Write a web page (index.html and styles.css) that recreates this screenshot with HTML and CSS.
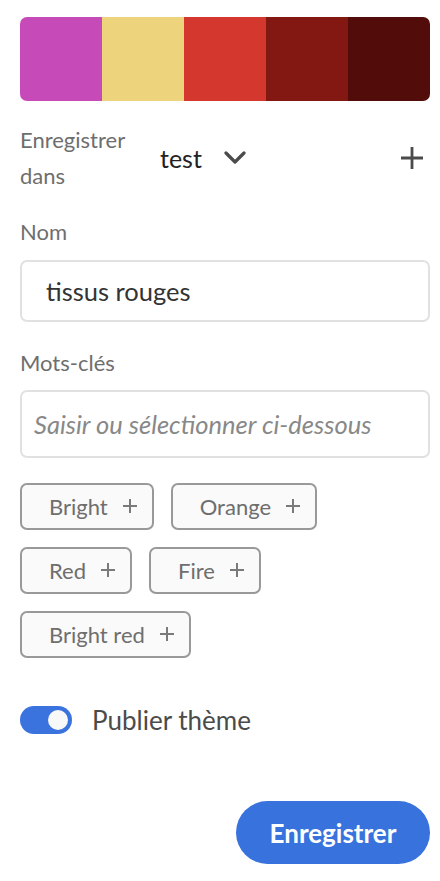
FILE: index.html
```html
<!DOCTYPE html>
<html lang="fr">
<head>
<meta charset="utf-8">
<title>Enregistrer thème</title>
<link rel="stylesheet" href="styles.css">
</head>
<body>
<div class="panel">
  <div class="palette">
    <div class="swatch s1"></div>
    <div class="swatch s2"></div>
    <div class="swatch s3"></div>
    <div class="swatch s4"></div>
    <div class="swatch s5"></div>
  </div>

  <div class="save-row">
    <div class="save-label">Enregistrer<br>dans</div>
    <div class="lib-select">
      <span class="lib-name">test</span>
      <svg class="chevron" width="22" height="14" viewBox="0 0 22 14"><path d="M2 2 L11 11 L20 2" fill="none" stroke="#4b4b4b" stroke-width="3.2" stroke-linecap="round" stroke-linejoin="round"/></svg>
    </div>
    <svg class="add-lib" width="24" height="24" viewBox="0 0 24 24"><path d="M12 1 V23 M1 12 H23" stroke="#4b4b4b" stroke-width="2.8" stroke-linecap="butt"/></svg>
  </div>

  <div class="field-label label-nom">Nom</div>
  <div class="input name-input">tissus rouges</div>

  <div class="field-label label-tags">Mots-clés</div>
  <div class="input tags-input">Saisir ou sélectionner ci-dessous</div>

  <div class="tags">
    <div class="tag-row">
      <span class="tag">Bright<svg class="tag-plus" width="14" height="14" viewBox="0 0 14 14"><path d="M7 0 V14 M0 7 H14" stroke="#7a7a7a" stroke-width="2"/></svg></span>
      <span class="tag">Orange<svg class="tag-plus" width="14" height="14" viewBox="0 0 14 14"><path d="M7 0 V14 M0 7 H14" stroke="#7a7a7a" stroke-width="2"/></svg></span>
    </div>
    <div class="tag-row">
      <span class="tag">Red<svg class="tag-plus" width="14" height="14" viewBox="0 0 14 14"><path d="M7 0 V14 M0 7 H14" stroke="#7a7a7a" stroke-width="2"/></svg></span>
      <span class="tag">Fire<svg class="tag-plus" width="14" height="14" viewBox="0 0 14 14"><path d="M7 0 V14 M0 7 H14" stroke="#7a7a7a" stroke-width="2"/></svg></span>
    </div>
    <div class="tag-row">
      <span class="tag">Bright red<svg class="tag-plus" width="14" height="14" viewBox="0 0 14 14"><path d="M7 0 V14 M0 7 H14" stroke="#7a7a7a" stroke-width="2"/></svg></span>
    </div>
  </div>

  <div class="publish-row">
    <span class="toggle"><span class="knob"></span></span>
    <span class="publish-label">Publier thème</span>
  </div>

  <div class="actions">
    <button class="save-btn">Enregistrer</button>
  </div>
</div>
</body>
</html>
```

FILE: styles.css
```css
* { box-sizing: border-box; }
html, body { margin: 0; padding: 0; background: #ffffff; }
body {
  font-family: Lato, "Open Sans", sans-serif;
  color: #4b4b4b;
  width: 440px;
}
.panel {
  padding: 17px 10px 0 20px;
  display: flex;
  flex-direction: column;
}
.palette {
  display: flex;
  height: 84px;
  border-radius: 7px;
  overflow: hidden;
}
.swatch { flex: 1; }
.s1 { background: #c74ab9; }
.s2 { background: #ecd37c; }
.s3 { background: #d4372e; }
.s4 { background: #821811; }
.s5 { background: #520c09; }

.save-row {
  display: flex;
  align-items: center;
  margin-top: 21px;
}
.save-label {
  width: 140px;
  font-size: 22px;
  line-height: 36px;
  color: #6e6e6e;
}
.lib-select {
  display: flex;
  align-items: center;
  flex: 1;
}
.lib-name {
  font-size: 25px;
  color: #222222;
}
.chevron { margin-left: 22px; }
.add-lib { margin-right: 6px; }

.field-label {
  font-size: 22px;
  color: #6e6e6e;
  line-height: 26px;
}
.label-nom { margin-top: 25px; }
.label-tags { margin-top: 28px; }

.input {
  border: 2px solid #e1e1e1;
  border-radius: 7px;
  display: flex;
  align-items: center;
}
.name-input {
  margin-top: 15px;
  height: 62px;
  padding-left: 24px;
  font-size: 25.5px;
  color: #333333;
}
.tags-input {
  margin-top: 14px;
  height: 68px;
  padding-left: 12px;
  font-size: 25.5px;
  font-style: italic;
  color: #888888;
}

.tags {
  margin-top: 25px;
  display: flex;
  flex-direction: column;
  gap: 17px;
}
.tag-row {
  display: flex;
  gap: 17px;
}
.tag {
  height: 47px;
  border: 2px solid #999999;
  border-radius: 7px;
  background: #fafafa;
  padding: 0 15px 0 27px;
  display: inline-flex;
  align-items: center;
  font-size: 22px;
  color: #6e6e6e;
}
.tag-plus { margin-left: 15px; margin-top: -2px; }

.publish-row {
  margin-top: 46px;
  display: flex;
  align-items: center;
}
.toggle {
  width: 52px;
  height: 28px;
  border-radius: 14px;
  background: #3a73de;
  display: flex;
  align-items: center;
  justify-content: flex-end;
  padding-right: 4px;
}
.knob {
  width: 20px;
  height: 20px;
  border-radius: 50%;
  background: #f8f8f8;
}
.publish-label {
  margin-left: 20px;
  font-size: 26px;
  color: #4b4b4b;
}

.actions {
  margin-top: 65px;
  display: flex;
  justify-content: flex-end;
}
.save-btn {
  width: 194px;
  height: 63px;
  border: none;
  border-radius: 32px;
  background: #3872dd;
  color: #ffffff;
  font-family: Lato, "Open Sans", sans-serif;
  font-weight: 700;
  font-size: 26px;
  padding: 0;
}
```
